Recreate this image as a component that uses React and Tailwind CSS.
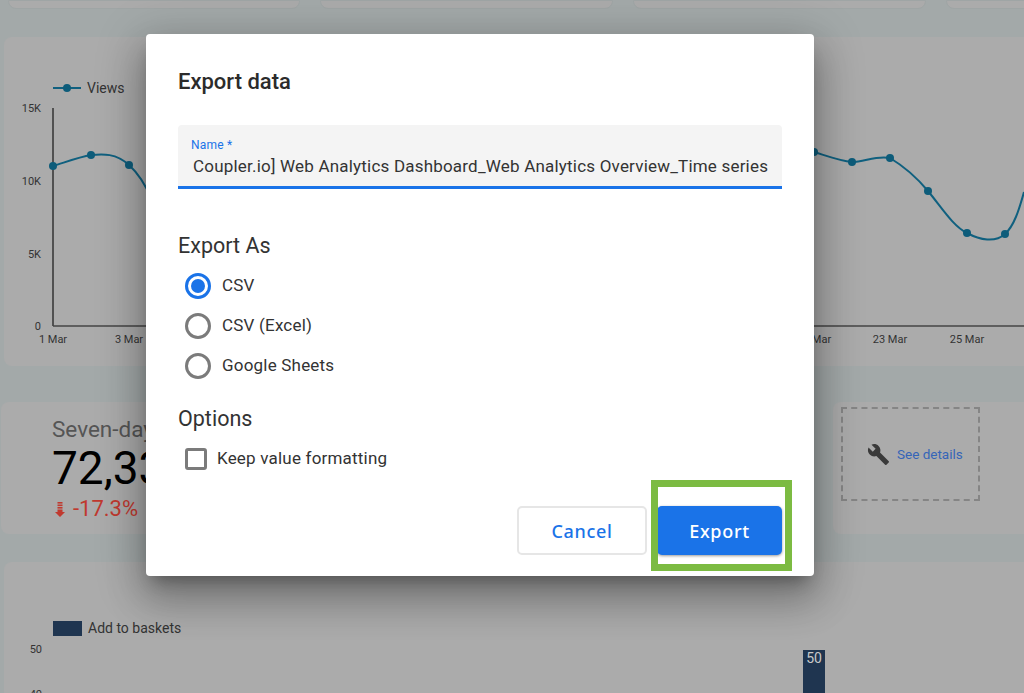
import { MdBuild } from "react-icons/md";

const font = { fontFamily: "Roboto, sans-serif" };
const buttonFont = { fontFamily: '"Noto Sans", sans-serif' };

const yLabels = [["15K", 108], ["10K", 181], ["5K", 254], ["0", 326]];
const xLabels = [["1 Mar", 53], ["3 Mar", 129], ["21 Mar", 814], ["23 Mar", 890], ["25 Mar", 967]];
const points = [[53, 166], [91, 155], [129, 165], [814, 152], [852, 162], [890, 158], [928, 191], [967, 233], [1005, 234]];

function ViewsChart() {
  return (
    <svg viewBox="4 37 1020 329" className="w-full h-full block" style={font}>
      <line x1="53" y1="108" x2="53" y2="326" stroke="#333" strokeWidth="1.5" />
      <line x1="53" y1="326" x2="1024" y2="326" stroke="#444" strokeWidth="1.5" />
      <line x1="53" y1="88" x2="81" y2="88" stroke="#10607f" strokeWidth="2" />
      <circle cx="67" cy="88" r="4" fill="#0d5c7a" />
      <text x="87" y="93" fontSize="14" fill="#333">Views</text>
      {yLabels.map(([t, y]) => (
        <text key={t} x="41" y={y + 4} fontSize="11" textAnchor="end" fill="#333">{t}</text>
      ))}
      {xLabels.map(([t, x]) => (
        <text key={t} x={x} y="343" fontSize="11" textAnchor="middle" fill="#333">{t}</text>
      ))}
      <path
        d="M53 166C66 162 79 157 91 155C103 154 116 153 129 165C139 174 147 188 152 200"
        fill="none"
        stroke="#10607f"
        strokeWidth="2"
      />
      <path
        d="M800 148L814 152C827 156 840 161 852 162C864 162 877 155 890 158C905 167 918 179 928 191C942 208 953 226 967 233C980 240 995 243 1005 234C1014 226 1019 210 1024 192"
        fill="none"
        stroke="#10607f"
        strokeWidth="2"
      />
      {points.map(([x, y]) => (
        <circle key={x} cx={x} cy={y} r="4" fill="#0d5c7a" />
      ))}
    </svg>
  );
}

function BasketsChart() {
  return (
    <svg viewBox="4 562 1020 131" className="w-full h-full block" style={font}>
      <rect x="53" y="621" width="29" height="15" fill="#1f3550" />
      <text x="88" y="633" fontSize="14" fill="#333">Add to baskets</text>
      <text x="42" y="653" fontSize="11" textAnchor="end" fill="#333">50</text>
      <text x="42" y="698" fontSize="11" textAnchor="end" fill="#333">40</text>
      <rect x="803" y="650" width="22" height="50" fill="#1f3550" />
      <text x="814" y="663" fontSize="14" textAnchor="middle" fill="#c9c9c9">50</text>
    </svg>
  );
}

function DownArrow() {
  return (
    <svg width="10" height="15" viewBox="0 0 10 15" fill="#c0392f">
      <rect x="2.500" y="0" width="5" height="1.600" />
      <rect x="2.500" y="2.500" width="5" height="1.600" />
      <rect x="2.500" y="5" width="5" height="1.600" />
      <path d="M2.500 7.500h5v2.500h2.500L5 15L0 10h2.500z" />
    </svg>
  );
}

function Radio({ label, checked }) {
  return (
    <div className="flex items-center h-[40px] pl-[7px]">
      <span
        className={
          checked
            ? "w-[26px] h-[26px] rounded-full border-[3px] border-[#1a73e8] flex items-center justify-center"
            : "w-[26px] h-[26px] rounded-full border-[3px] border-[#7b7b7b]"
        }
      >
        {checked && <span className="w-[14px] h-[14px] rounded-full bg-[#1a73e8]" />}
      </span>
      <span className="ml-[11px] text-[17px] text-[#333] tracking-[0.2px]">{label}</span>
    </div>
  );
}

export default function App() {
  return (
    <div className="relative w-[1024px] h-[693px] overflow-hidden bg-[#a3a9a9]" style={font}>
      <div className="flex gap-5 pl-2 h-[9px]">
        <div className="w-[292px] shrink-0 bg-[#ababab] rounded-b-lg border border-[#9fa5a5]" />
        <div className="w-[293px] shrink-0 bg-[#ababab] rounded-b-lg border border-[#9fa5a5]" />
        <div className="w-[293px] shrink-0 bg-[#ababab] rounded-b-lg border border-[#9fa5a5]" />
        <div className="w-[100px] shrink-0 bg-[#ababab] rounded-b-lg border border-[#9fa5a5]" />
      </div>

      <div className="ml-1 mt-[28px] h-[329px] bg-[#ababab] rounded-l-lg">
        <ViewsChart />
      </div>

      <div className="flex justify-between mt-[36px] h-[132px]">
        <div className="w-[420px] ml-px bg-[#ababab] rounded-lg pl-[51px] pt-[13px]">
          <div className="text-[22.5px] leading-[28px] text-[#555]">Seven-day views</div>
          <div className="text-[46px] leading-[50px] text-black">72,331</div>
          <div className="flex items-center gap-[8px] pl-[3px] mt-px text-[22px] leading-[30px] text-[#c0392f]">
            <DownArrow />
            -17.3%
          </div>
        </div>
        <div className="w-[191px] bg-[#ababab] rounded-l-lg pl-2 pt-[5px]">
          <div className="w-[139px] h-[94px] border-2 border-dashed border-[#858585] flex items-center pl-[24px] gap-[7px]">
            <MdBuild className="text-[#3a3a3a] text-[23px] shrink-0" />
            <span className="text-[13.5px] whitespace-nowrap text-[#3565b8]">See details</span>
          </div>
        </div>
      </div>

      <div className="ml-1 mt-[28px] h-[131px] bg-[#ababab] rounded-tl-lg">
        <BasketsChart />
      </div>

      <div className="absolute left-[146px] top-[34px] w-[668px] h-[542px] bg-white rounded-[4px] shadow-[0_11px_15px_-7px_rgba(0,0,0,0.3),0_24px_38px_3px_rgba(0,0,0,0.2),0_9px_46px_8px_rgba(0,0,0,0.18)] px-[32px] pt-[34px]">
        <h2 className="text-[22px] leading-[28px] font-medium text-[#2b2b2b]">Export data</h2>

        <div className="mt-[29px] h-[64px] bg-[#f4f4f4] rounded-t-[4px] border-b-[3px] border-[#1a73e8] px-[13px] pt-[12px]">
          <div className="text-xs leading-[16px] text-[#1a73e8] tracking-[0.2px]">Name *</div>
          <div className="text-[17px] leading-[24px] mt-px text-[#333] pl-[2px] whitespace-nowrap overflow-hidden tracking-[0.2px]">
            Coupler.io] Web Analytics Dashboard_Web Analytics Overview_Time series
          </div>
        </div>

        <div className="mt-[43px] text-[21.5px] leading-[28px] text-[#333]">Export As</div>
        <div className="mt-[6px]">
          <Radio label="CSV" checked />
          <Radio label="CSV (Excel)" />
          <Radio label="Google Sheets" />
        </div>

        <div className="mt-[19px] text-[21.5px] leading-[28px] text-[#333]">Options</div>
        <div className="flex items-center h-[22px] mt-[15px] pl-[7px]">
          <span className="w-[22px] h-[22px] rounded-[3px] border-[3px] border-[#7b7b7b]" />
          <span className="ml-[10px] text-[17px] text-[#333] tracking-[0.2px]">Keep value formatting</span>
        </div>

        <div className="flex justify-end gap-[10px] mt-[36px]">
          <button
            className="w-[130px] h-[49px] rounded-[5px] bg-white border-2 border-[#e6e6e6] text-[#1a73e8] text-lg font-medium tracking-[0.7px]"
            style={buttonFont}
          >
            Cancel
          </button>
          <button
            className="w-[125px] h-[49px] rounded-[5px] bg-[#1a73e8] text-white text-lg font-medium tracking-[0.7px] shadow-[0_1px_3px_rgba(0,0,0,0.4)]"
            style={buttonFont}
          >
            Export
          </button>
        </div>
      </div>

      <div className="absolute left-[651px] top-[480px] w-[141px] h-[91px] border-[7px] border-[#7cbb42]" />
    </div>
  );
}
